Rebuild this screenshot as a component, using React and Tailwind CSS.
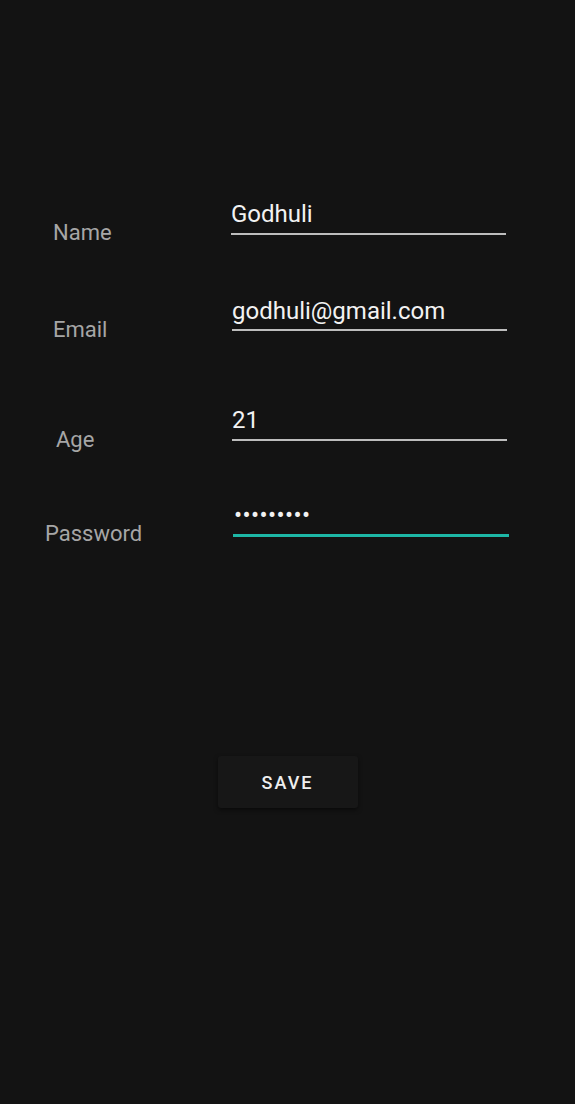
import React from "react";

export default function App() {
  return (
    <div className="w-full h-[1104px] bg-[#131313] overflow-hidden" style={{ fontFamily: "Roboto, 'Noto Sans', sans-serif" }}>
      <div className="pt-[200px] flex flex-col">
        <div className="flex items-start h-[35px]">
          <div className="ml-[53px] w-[178px] mt-[20px] shrink-0 text-[22px] leading-[26px] text-[#a6a6a6]">Name</div>
          <div className="w-[275px] pb-[5px] border-b-2 border-[#bdbdbd]">
            <div className="h-[28px] text-[24px] leading-[28px] text-[#f2f2f2]">Godhuli</div>
          </div>
        </div>
        <div className="flex items-start h-[34px] mt-[62px]">
          <div className="ml-[53px] w-[179px] mt-[20px] shrink-0 text-[22px] leading-[26px] text-[#a6a6a6]">Email</div>
          <div className="w-[275px] pb-[4px] border-b-2 border-[#bdbdbd]">
            <div className="h-[28px] text-[24px] leading-[28px] text-[#f2f2f2] whitespace-nowrap">godhuli@gmail.com</div>
          </div>
        </div>
        <div className="flex items-start h-[35px] mt-[75px]">
          <div className="ml-[56px] w-[176px] mt-[21px] shrink-0 text-[22px] leading-[26px] text-[#a6a6a6]">Age</div>
          <div className="w-[275px] pb-[5px] border-b-2 border-[#bdbdbd]">
            <div className="h-[28px] text-[24px] leading-[28px] text-[#f2f2f2]">21</div>
          </div>
        </div>
        <div className="flex items-start h-[36px] mt-[60px]">
          <div className="ml-[45px] w-[188px] mt-[20px] shrink-0 text-[22px] leading-[26px] text-[#a6a6a6]">Password</div>
          <div className="w-[276px] pb-[5px] border-b-[3px] border-[#1db7a6]">
            <div className="h-[28px] pl-[1px] text-[24px] leading-[28px] text-[#f2f2f2] tracking-[0.4px] whitespace-nowrap">•••••••••</div>
          </div>
        </div>
        <div className="mt-[219px] flex justify-center">
          <button className="w-[140px] h-[52px] bg-[#171717] rounded-[3px] shadow-[0_2px_4px_rgba(0,0,0,0.5)] text-[18px] font-medium tracking-[2px] text-[#eeeeee] flex items-center justify-center">
            SAVE
          </button>
        </div>
      </div>
    </div>
  );
}
